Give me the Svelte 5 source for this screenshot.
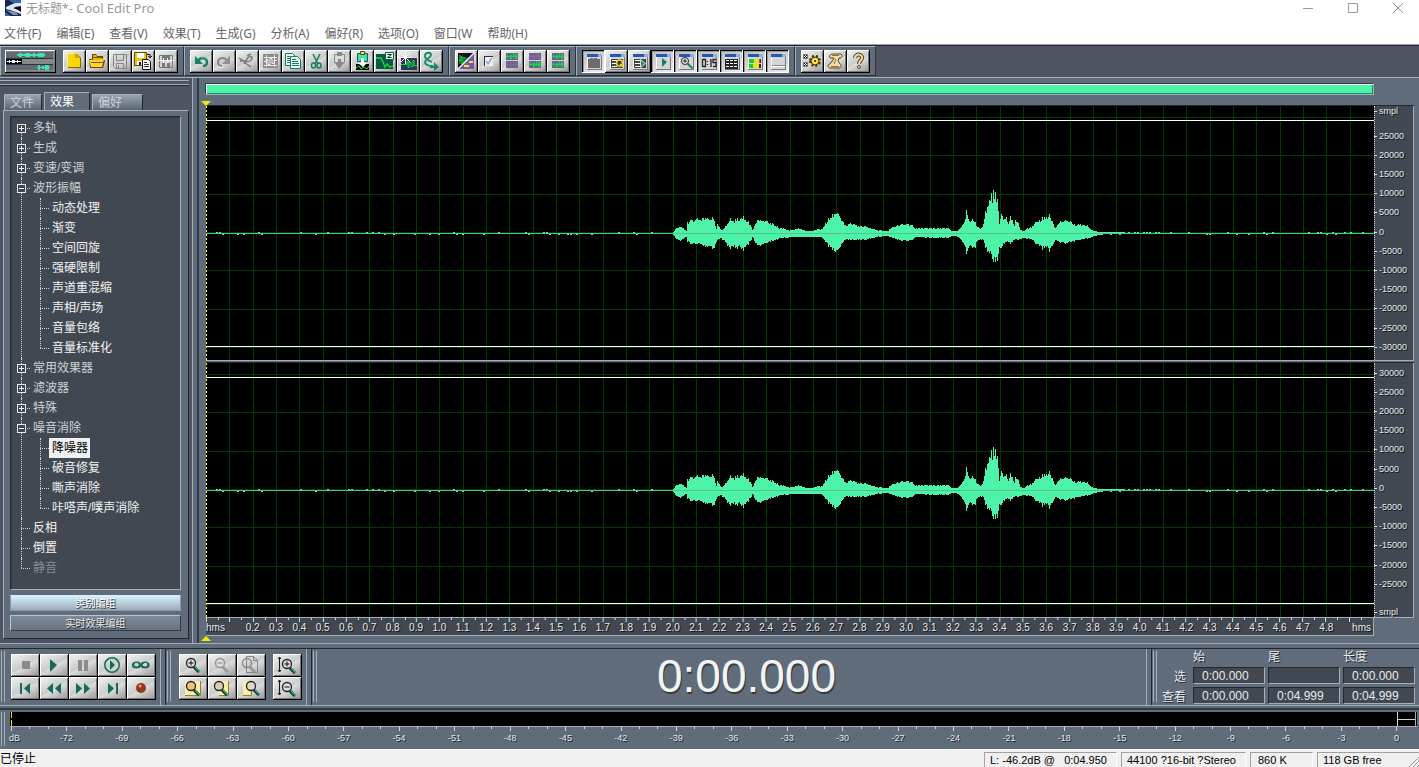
<script lang="ts">
    type TreeNode = { name: string; open?: boolean; disabled?: boolean; children?: string[] };

    const menus = ['文件(F)', '编辑(E)', '查看(V)', '效果(T)', '生成(G)', '分析(A)', '偏好(R)', '选项(O)', '窗口(W', '帮助(H)'];

    let tree: TreeNode[] = $state([
        { name: '多轨', children: [] },
        { name: '生成', children: [] },
        { name: '变速/变调', children: [] },
        { name: '波形振幅', open: true, children: ['动态处理', '渐变', '空间回旋', '强硬限制', '声道重混缩', '声相/声场', '音量包络', '音量标准化'] },
        { name: '常用效果器', children: [] },
        { name: '滤波器', children: [] },
        { name: '特殊', children: [] },
        { name: '噪音消除', open: true, children: ['降噪器', '破音修复', '嘶声消除', '咔嗒声/噗声消除'] },
        { name: '反相' },
        { name: '倒置' },
        { name: '静音', disabled: true }
    ]);
    let selected = $state('降噪器');
    let tab = $state('效果');

    // window frame shared by the view toggle buttons
    const win = '<path fill="#d5d5d5" d="M5 5h15v15H5z"/><path fill="#fff" d="M5 7h1v12H5z"/><path fill="#2456b8" d="M5 4h11v3H5z"/><path fill="#8ab0e8" d="M16 4h4v3h-4z"/><path fill="#777" d="M19 7h1v13H5v-1h14z"/>';
    const waveRow = (y: number, c: string, bg: string) =>
        `<path fill="${bg}" d="M5 ${y}h12v7H5z"/><path fill="${c}" d="M5 ${y + 3}h12v1H5zM6 ${y + 1}h1v4H6zM9 ${y + 2}h2v4H9zM12 ${y}h1v5h-1zM14 ${y + 1}h2v5h-2z"/>`;
    const lens = (x: number, y: number, c: string, fill: string, handle: string) =>
        `<circle cx="${x}" cy="${y}" r="4.5" fill="${fill}" stroke="${c}" stroke-width="1.3"/><path stroke="${c}" stroke-width="3" d="M${x + 3} ${y + 4}l5 5"/><path stroke="${handle}" stroke-width="1.6" d="M${x + 4} ${y + 4}l5 5"/>`;
    const pageLens = '<path fill="#f5efaa" d="M';

    const icons: Record<string, string> = {
        multi: '<path fill="#888" d="M1 1h48v20H1z"/><path fill="#66686e" d="M1 2h47v6H1zM1 15h47v5H1z"/><path fill="#000" d="M1 9h16v5H1z"/><path stroke="#22364f" d="M1 8.5h47M1 14.5h47"/><path fill="#3fe5b0" d="M12 4h28v2H12zM14 3h3v4h-3zM20 3h5v4h-5zM28 3h2v4h-2zM33 3h6v4h-6zM32 17h13v1H32zM33 15h2v5h-2zM37 16h2v3h-2zM40 15h4v5h-4z"/><path fill="#fff" d="M2 11h14v1H2zM4 10h1v3H4zM7 10h3v3H7zM12 10h1v3h-1z"/>',
        new: '<path fill="#8a6500" d="M5 4h9l4 4v10H5z"/><path fill="#f6d90b" d="M4 3h8l5 5v9H4z"/><path fill="#d1a108" d="M12 3v5h5z"/><path fill="#fff27a" d="M4 3h7v1H5v12H4z"/>',
        open: '<path fill="#664900" d="M6 4h4l1 2h6v4h2v1l-2 7H4L3 9h3z"/><path fill="#e5b20d" d="M7 5h3l1 2h5v3H8L5 9h2z"/><path fill="#ffd52e" d="M3 10h10l2-1h3l-2 8H5z"/><path stroke="#835e00" d="M5 12.500h12M7 7.500h9"/>',
        save: '<path fill="none" stroke="#858585" d="M4.500 4.500h13v14H6.500l-2-2zM7.500 4.500v6h7v-6M7.500 18.500v-5h7v5M9.500 15v3"/>',
        saveas: '<path fill="#edc20d" stroke="#6d4c00" d="M2.500 2.500h12v13h-12z"/><path fill="#fff" d="M5 3h7v5H5zM5 11h6v4H5z"/><path fill="#222" d="M7 12h2v3H7z"/><path fill="#fff" stroke="#111" d="M10.500 9.500h6l2 2v8h-8z"/><path stroke="#333" d="M12 12.500h3M12 14.500h5M12 16.500h5"/><path fill="none" stroke="#111" d="M15 4.500h3v3M16.500 6l1.500 2 2-2"/>',
        savesel: '<path fill="none" stroke="#777" d="M4.500 5.500h13v12h-13z"/><path fill="#777" d="M7 6h8v4H7zM7 13h3v4H7zM12 13h3v4h-3z"/><path stroke="#eee" d="M3 10.500h15M8.500 8v5M12.500 8v5"/>',
        undo: '<path fill="none" stroke="#168264" stroke-width="2.400" d="M8 11c3-5 9-3 9 1 0 3-2 4-4 4"/><path fill="#168264" d="M5 6v8h8z"/><path stroke="#77c9ac" d="M11 7.500c3-1 5 0 6 2" fill="none"/>',
        redo: '<path fill="none" stroke="#858585" stroke-width="2" d="M14 11c-3-5-9-3-9 1 0 3 2 4 4 4"/><path fill="#8f8f8f" d="M17 6v8H9z"/><path fill="none" stroke="#fff" d="M6 16c1 2 3 2 4 1"/>',
        trim: '<path fill="none" stroke="#777" stroke-width="1.400" d="M3 8l5 3c6 2 8-1 8-3s-3-2-5 1l-3 5M8 12l7 5M4 11h7M11 6l4-2"/>',
        sel: '<path fill="#8a8a8a" d="M4 4h15v14H4z"/><path fill="none" stroke="#eee" d="M5 7.500h13M5 15.500h13M5 11.500h2V9.500h2v5h2v-6h2v5h2v-3h3M7.500 5v12M15.500 5v12"/>',
        copy: '<g fill="#eafff6" stroke="#187d62"><path d="M3.500 3.500h7l3 3v9h-10z"/><path d="M8.500 6.500h7l3 3v9h-10z"/></g><path stroke="#187d62" d="M5 6.500h3M5 8.500h3M5 10.500h3M5 12.500h3M10 9.500h4M10 11.500h6M10 13.500h7M10 15.500h7"/>',
        cut: '<path fill="none" stroke="#187d62" stroke-width="1.500" d="M8 4l5 10M15 4l-5 10"/><g fill="none" stroke="#187d62" stroke-width="1.500"><ellipse cx="8.500" cy="15.500" rx="2" ry="2.500"/><ellipse cx="14" cy="15.500" rx="2" ry="2.500"/></g>',
        paste: '<path fill="#ddd" stroke="#888" d="M6.500 4.500h10v8h-10z"/><path fill="#888" d="M9 2h5v4H9zM10 9h3v4h3l-5 6-4-6h3z"/>',
        mix: '<path fill="#47dfa8" stroke="#07664b" d="M6.500 3.500h10v8h-10z"/><path fill="#f0de40" stroke="#54510c" d="M9.500 1.500h4v3h-4z"/><path fill="#000" d="M5 14h13v6H5z"/><path fill="#fff" d="M10 8h3v5h3l-4 4-5-4h3z"/><path stroke="#16ee2d" fill="none" d="M5 18l3-2 2 3 3-2 3 2 2-3"/>',
        zero: '<path fill="#055b47" d="M2 4h17v15H2z"/><path stroke="#164b43" d="M2 9.500h17M2 14.500h17"/><path fill="none" stroke="#1dde32" stroke-width="1.300" d="M2 8h5l2 4 2 5 2-3 3 3 3-1"/><path fill="#dff8ed" stroke="#08634a" d="M11.500 2.500h8v7h-8z"/><path fill="none" stroke="#222" d="M13.500 4.500h4l-4 3h4"/>',
        gen: '<path fill="#32345d" d="M4 8h16v12H4z"/><path stroke="#00e428" fill="none" d="M4 14.500h6v-3h1v6h1v-5h2v4h2v-6h1v5h3"/><path stroke="#fff" d="M8.500 2v12M2 7.500h13M4 3l9 9M13 3l-9 9"/>',
        batch: '<path fill="none" stroke="#158766" stroke-width="1.800" d="M12 12C7 10 4 8 5 5c1-3 6-3 6 0 0 3-6 4-6 7 0 4 5 4 8 4"/><path fill="#158766" d="M14 12l5 5-5 4v-3h-4v-2h4z"/>',
        spectral: '<path fill="#131322" d="M3 3h16v16H3z"/><path fill="#7457a5" d="M19 3v16H3z"/><path stroke="#10e22b" fill="none" d="M4 10.500h2v-4h1v8h1v-7h2v4h2v-4M5 5v9"/><path stroke="#eee" stroke-width="1.500" d="M3 19L19 3"/><path fill="#f1e24b" d="M9 15h5v2H9zM14 11h4v2h-4z"/>',
        check: '<path fill="#f0f0f0" d="M6 6h9v10H6z"/><path fill="#332d3d" d="M6 6h9v1H7v9H6z"/><path fill="none" stroke="#92a5c7" stroke-width="1.500" d="M8 11l2 3 4-6"/>',
        left: waveRow(3, '#08e126', '#7457a5') + waveRow(11, '#77737c', '#7457a5'),
        right: waveRow(3, '#77737c', '#7457a5') + waveRow(11, '#08e126', '#7457a5'),
        both: waveRow(3, '#08e126', '#7457a5') + waveRow(11, '#08e126', '#7457a5'),
        winfile: win + '<path fill="#6b6b6b" d="M6 9h2V8h3v1h1V8h3v1h3v9H6z"/>',
        wincue: win + '<path fill="#444" d="M6 9h12v9H6z"/><path stroke="#fff" d="M7 10.500h5M7 13.500h5M7 16.500h5"/><circle cx="14.500" cy="13" r="3" fill="#333" stroke="#f1db15" stroke-width="1.500"/><path stroke="#f1db15" stroke-width="1.500" d="M15 14l3 3"/>',
        winlist: win + '<path fill="#444" d="M6 9h12v9H6z"/><path stroke="#fff" d="M7 10.500h5M7 13.500h5M7 16.500h5"/><path fill="#1f9578" stroke="#ddd" d="M12.500 9.500v8l5-4z"/>',
        winplay: win + '<path fill="#137f65" d="M11 8v9l5-5z"/>',
        winzoom: win + '<circle cx="11" cy="11" r="3.500" fill="#eee" stroke="#222"/><path stroke="#222" d="M9 11h4M11 9v4"/><path stroke="#1d7f63" stroke-width="2" d="M13.500 13.500l5 5"/>',
        wintime: win + '<path fill="none" stroke="#222" stroke-width="1.300" d="M5.500 9.500h3v7h-3zM10.500 11v1M10.500 14v1M13 10h1v7M19 9.500h-3v3h3v4h-3"/>',
        winsel: win + '<path fill="#222" d="M5 9h13v10H5z"/><path stroke="#fff" stroke-width="1" d="M6 10.500h3M10 10.500h3M14 10.500h3M6 13.500h3M10 13.500h3M14 13.500h3M6 16.500h3M10 16.500h3M14 16.500h3"/>',
        winlevel: win + '<path fill="#17d22b" d="M6 9h5v4H6zM6 14h4v4H6z"/><path fill="#eee018" d="M11 9h5v4h-5zM10 14h6v4h-6z"/><path fill="#e83b21" d="M16 9h1v4h-1z"/><path fill="#222" d="M17 9h1v4h-1zM16 14h2v4h-2z"/>',
        winstatus: win + '<path stroke="#888" d="M6 15.500h13"/><path stroke="#fff" d="M6 16.500h13"/>',
        settings: '<g fill="#fff" stroke="#777"><path d="M2.500 4.500h4v4h-4zM2.500 12.500h4v4h-4z"/></g><path stroke="#111" d="M3 5l3 3M6 5l-3 3M3 13l3 3M6 13l-3 3"/><circle cx="14" cy="11" r="4" fill="#f2ca20" stroke="#4b3500"/><path stroke="#4b3500" stroke-width="2" stroke-dasharray="2 2" fill="none" d="M9 11a5 5 0 1 0 10 0 5 5 0 1 0-10 0"/><circle cx="14" cy="11" r="2.500" fill="#ffeb6b"/><circle cx="14" cy="11" r="1" fill="#111"/>',
        script: '<path fill="#f3dba3" stroke="#58401d" d="M8 4h9c2 1 1 4-1 4h-1l-1 3 2 3c2 1 1 4-1 4H6c-3-1-2-4 0-4l3-4 1-2H7C4 7 5 5 8 4z"/><path stroke="#8a7044" fill="none" d="M8 5.500h7M7 16.500h8M12 9l-2 5"/>',
        help: '<path fill="none" stroke="#5a4925" stroke-width="4" d="M8 8c0-5 8-4 7 0 0 2-3 3-3 6"/><path fill="none" stroke="#f2dda4" stroke-width="2" d="M8 8c0-5 8-4 7 0 0 2-3 3-3 6"/><circle cx="12" cy="17" r="1.500" fill="#f2dda4" stroke="#5a4925"/>',
        stop: '<path fill="#8a8a8a" d="M11 7h8v8h-8z"/>',
        play: '<path fill="#176a57" d="M10 5v13l7-7z"/>',
        pause: '<path fill="#8c8c8c" d="M9 6h4v11H9zM15 6h4v11h-4z"/>',
        loopplay: '<circle cx="14" cy="11" r="7" fill="none" stroke="#226455" stroke-width="2"/><circle cx="14" cy="11" r="6" fill="none" stroke="#b7e9db"/><path fill="#176a57" d="M12 6v10l5-5z"/>',
        loop: '<g fill="none" stroke="#176a57" stroke-width="2.200"><ellipse cx="9.500" cy="11" rx="3.500" ry="2.500"/><ellipse cx="18" cy="11" rx="3.500" ry="2.500"/></g><path stroke="#9de1cd" d="M8 9.500h3M17 9.500h3"/>',
        begin: '<path fill="#176a57" d="M9 6h2v11H9zM19 6v11l-6-5.500z"/>',
        rewind: '<path fill="#176a57" d="M13 6v11l-6-5.500zM21 6v11l-6-5.500z"/>',
        forward: '<path fill="#176a57" d="M7 6v11l6-5.500zM15 6v11l6-5.500z"/>',
        end: '<path fill="#176a57" d="M10 6v11l6-5.500zM18 6h2v11h-2z"/>',
        rec: '<circle cx="14" cy="11" r="5" fill="#93361c"/><circle cx="13" cy="9" r="1.500" fill="#ff9a78"/>',
        zin: lens(12, 9, '#222', '#ddd', '#23b78c') + '<path stroke="#111" d="M9.500 9h5M12 6.500v5"/>',
        zout: lens(12, 9, '#929292', '#ddd', '#aaa') + '<path stroke="#888" d="M9.500 9h5"/>',
        zfull: '<path fill="none" stroke="#858585" d="M9.500 2.500h7l4 4v12h-11zM16.500 2.500v4h4"/>' + lens(10, 9, '#888', 'none', '#aaa'),
        zsel: pageLens + '6 4h16v15H6z"/><path stroke="#9c7b20" fill="none" d="M6 18.500h15.500V4"/>' + lens(12, 9, '#222', '#f3bf79', '#23b78c'),
        zleft: pageLens + '11 4h10v15H11z"/><path stroke="#9c7b20" fill="none" d="M11 18.500h9.500V4"/>' + lens(11, 9, '#222', '#dccdb0', '#23b78c'),
        zright: pageLens + '6 4h9v15H6z"/><path stroke="#9c7b20" fill="none" d="M6 18.500h8.500V4"/>' + lens(14, 9, '#222', '#dcdac5', '#23b78c'),
        vin: '<path stroke="#111" fill="none" d="M6.500 3v15M5 5l1.500-2L8 5M5 16l1.500 2L8 16"/>' + lens(14, 10, '#222', '#ddd', '#23b78c') + '<path stroke="#111" d="M11.500 10h5M14 7.500v5"/>',
        vout: '<path stroke="#111" fill="none" d="M6.500 3v15M5 5l1.500-2L8 5M5 16l1.500 2L8 16"/>' + lens(14, 10, '#222', '#ddd', '#23b78c') + '<path stroke="#111" d="M11.500 10h5"/>'
    };

    const toolGroups = [
        ['new', 'open', 'save', 'saveas', 'savesel'],
        ['undo', 'redo', 'trim', 'sel', 'copy', 'cut', 'paste', 'mix', 'zero', 'gen', 'batch'],
        ['spectral', 'check', 'left', 'right', 'both'],
        ['winfile', 'wincue', 'winlist', 'winplay', 'winzoom', 'wintime', 'winsel', 'winlevel', 'winstatus'],
        ['settings', 'script', 'help']
    ];
    const pressed = ['winfile', 'winplay', 'winzoom', 'wintime', 'winsel', 'winlevel', 'winstatus'];
    const transport = ['stop', 'play', 'pause', 'loopplay', 'loop', 'begin', 'rewind', 'forward', 'end', 'rec'];
    const zooms = ['zin', 'zout', 'zfull', 'zsel', 'zleft', 'zright'];

    // [x, peak above zero, peak below zero]
    const envelope = [
        [466, 0, 0], [470, 5, 5], [474, 6, 7], [477, 5, 5], [480, 2, 3], [481, 11, 8], [484, 13, 10], [489, 13, 10], [491, 15, 10], [494, 13, 10], [497, 15, 12], [501, 15, 13], [506, 16, 15],
        [508, 12, 14], [510, 4, 8], [511, 9, 6], [514, 4, 4], [516, 3, 6], [519, 7, 8], [521, 9, 12], [524, 15, 15], [527, 12, 13], [531, 15, 15], [534, 14, 13], [537, 17, 17], [539, 13, 13],
        [542, 12, 11], [545, 6, 6], [546, 3, 3], [549, 9, 9], [551, 13, 11], [554, 13, 12], [557, 12, 10], [561, 12, 9], [567, 9, 7], [571, 7, 6], [572, 5, 5], [577, 5, 4], [582, 3, 4],
        [587, 3, 3], [592, 5, 3], [597, 3, 3], [604, 2, 3], [611, 4, 3], [616, 4, 4], [619, 10, 8], [622, 15, 13], [626, 19, 16], [629, 19, 18], [631, 20, 16], [634, 15, 13], [637, 11, 8],
        [639, 8, 6], [644, 10, 6], [648, 9, 6], [652, 7, 6], [659, 7, 6], [664, 5, 5], [671, 3, 3], [681, 2, 2], [686, 6, 4], [691, 8, 6], [696, 9, 7], [701, 9, 7], [706, 8, 6],
        [708, 5, 4], [712, 5, 3], [724, 5, 4], [742, 5, 4], [746, 2, 2], [751, 2, 3], [753, 4, 4], [756, 8, 8], [759, 14, 13], [760, 23, 20], [762, 14, 14], [766, 14, 14],
        [769, 11, 14], [770, 7, 8], [775, 5, 6], [777, 9, 6], [779, 22, 14], [781, 26, 18], [783, 33, 19], [785, 40, 20], [786, 30, 25], [787, 43, 28], [789, 41, 28], [791, 34, 27],
        [792, 22, 20], [793, 9, 13], [795, 19, 14], [798, 14, 10], [800, 16, 8], [802, 9, 8], [804, 17, 10], [806, 13, 8], [808, 7, 6], [809, 13, 5], [812, 10, 6], [814, 3, 5],
        [817, 2, 4], [821, 5, 5], [826, 7, 6], [829, 11, 10], [833, 13, 12], [836, 16, 16], [840, 16, 13], [843, 19, 18], [846, 12, 12], [848, 6, 8], [851, 8, 7], [854, 12, 9],
        [859, 13, 10], [864, 12, 8], [868, 9, 8], [874, 9, 6], [881, 8, 5], [884, 4, 4], [888, 2, 2], [894, 1, 1], [900, 1, 0], [918, 1, 0], [919, 0, 0]
    ];

    function noise(n: number) {
        const v = Math.sin(n * 12.9898) * 43758.5453;
        return v - Math.floor(v);
    }

    function buildWave() {
        let d = '';
        for (let i = 0; i < envelope.length - 1; i++) {
            const [x0, u0, l0] = envelope[i];
            const [x1, u1, l1] = envelope[i + 1];
            for (let x = x0; x < x1; x++) {
                const t = (x - x0) / (x1 - x0);
                const k = x === x0 ? 1 : 0.8 + noise(x) * 0.22;
                const up = Math.round((u0 + (u1 - u0) * t) * k);
                const low = Math.round((l0 + (l1 - l0) * t) * k);
                d += `M${x} ${127 - up}h1v${up + low + 1}h-1z`;
            }
        }
        // low level hiss on both sides of the speech
        for (let x = 10; x < 1167; x += 3) {
            const limit = x > 890 && x < 970 ? 0.4 : 0.72;
            if ((x < 464 || x > 890) && noise(x) > limit) d += `M${x} ${noise(x + 1) > 0.5 ? 126 : 128}h2v1h-2z`;
        }
        return d;
    }
    const wave = buildWave();

    const vGrid = Array.from({ length: 49 }, (_, i) => Math.round((i + 1) * 23.34));
    const hGrid = [11, 49, 88, 126, 164, 203, 241];
    const scales = [
        ['smpl', ...Array.from({ length: 12 }, (_, i) => String(25000 - i * 5000))],
        [...Array.from({ length: 12 }, (_, i) => String(30000 - i * 5000)), 'smpl']
    ];
    const times = Array.from({ length: 47 }, (_, i) => ((i + 2) / 10).toFixed(1));
    const levels = Array.from({ length: 24 }, (_, i) => -72 + i * 3);
</script>

{#snippet tool(name: string, w: number)}
    <button class="tool" class:down={pressed.includes(name)} aria-label={name}>
        <svg width={w} height="22" viewBox="0 0 {w} 22">{@html icons[name]}</svg>
    </button>
{/snippet}

<div class="app">
    <header class="title">
        <svg width="16" height="16" viewBox="0 0 16 16">
            <path fill="#16244c" d="M0 0h16v16H0z" />
            <path fill="#3865ae" d="M3 0h13v3H9zM0 12l6 4H0z" />
            <path fill="#dfe8f2" d="M1 7l9-4h6v3l-7 1 7 5v2L5 10 1 9z" />
            <path fill="#090d1b" d="M8 8l8-1v4z" />
            <path fill="#7c94ad" d="M1 10l9 2 4 3H8z" />
        </svg>
        <span class="caption">无标题*<span class="product"> - Cool Edit Pro</span></span>
        <button aria-label="minimize"><svg width="10" height="10"><path d="M0 5.500h10" /></svg></button>
        <button aria-label="maximize"><svg width="10" height="10"><path d="M.5.5h9v9h-9z" /></svg></button>
        <button aria-label="close"><svg width="10" height="10"><path d="M0 0l10 10M10 0L0 10" /></svg></button>
    </header>
    <nav class="menu">
        {#each menus as item}
            <button>{item}</button>
        {/each}
    </nav>

    <div class="toolbar">
        {#each toolGroups as group, i}
            <div class="group">
                {#if i === 0}
                    <div class="wide">{@render tool('multi', 50)}</div>
                {/if}
                {#each group as name}
                    {@render tool(name, 22)}
                {/each}
            </div>
        {/each}
    </div>

    <main>
        <aside>
            <div class="grip"></div>
            <div class="tabs">
                {#each ['文件', '效果', '偏好'] as name}
                    <button class:active={tab === name} onclick={() => (tab = name)}>{name}</button>
                {/each}
            </div>
            <div class="panel">
                <ul class="tree">
                    {#each tree as node}
                        <li>
                            {#if node.children}
                                <button class="toggle" class:open={node.open} aria-label="toggle {node.name}" onclick={() => (node.open = !node.open)}></button>
                            {/if}
                            <button class="label" class:group-label={node.children} disabled={node.disabled}>{node.name}</button>
                            {#if node.open && node.children}
                                <ul>
                                    {#each node.children as child}
                                        <li><button class="label" class:selected={selected === child} onclick={() => (selected = child)}>{child}</button></li>
                                    {/each}
                                </ul>
                            {/if}
                        </li>
                    {/each}
                </ul>
                <button class="sort lit">类别编组</button>
                <button class="sort">实时效果编组</button>
            </div>
        </aside>

        <section class="editor">
            <div class="overview"></div>
            <div class="channels">
                {#each scales as labels, c}
                    <svg class="channel" viewBox="0 0 1168 254" preserveAspectRatio="none" shape-rendering="crispEdges">
                        <g stroke="#003c00">
                            {#each vGrid as x}<path d="M{x}.5 0v254" />{/each}
                            {#each hGrid as y}<path d="M0 {y}.5h1168" />{/each}
                        </g>
                        <path stroke="#fff" d="M0 14.500h1168M0 240.500h1168" />
                        <path fill="#4cf3a9" d={wave} />
                        <path stroke="#51c486" d="M0 127.500h1168" />
                        <path stroke="#ff0" stroke-dasharray="2 2" d="M.5 0v254" />
                    </svg>
                    <div class="scale" class:lower={c === 1}>
                        {#each labels as l}<span>{l}</span>{/each}
                    </div>
                {/each}
                <div class="ruler">
                    <svg viewBox="0 0 1168 4" preserveAspectRatio="none" shape-rendering="crispEdges">
                        {#each [0, ...vGrid] as x}
                            <path stroke="#dde2e8" d="M{x}.5 0v4M{x + 12}.5 0v2" />
                        {/each}
                    </svg>
                    <div class="times">
                        <span class="first">hms</span>
                        {#each times as t}<span>{t}</span>{/each}
                        <span class="last">hms</span>
                    </div>
                </div>
                <svg class="mark top" width="10" height="6"><path d="M0 0h10L5 5z" /></svg>
                <svg class="mark bottom" width="10" height="6"><path d="M0 5h10L5 0z" /></svg>
            </div>
        </section>
    </main>

    <div class="dock">
        <div class="pane">
            <div class="pad play">
                {#each transport as name}{@render tool(name, 28)}{/each}
            </div>
        </div>
        <div class="pane">
            <div class="pad zoom">
                {#each zooms as name}{@render tool(name, 28)}{/each}
            </div>
            <div class="pad vert">
                {@render tool('vin', 28)}
                {@render tool('vout', 28)}
            </div>
        </div>
        <div class="pane clock">0:00.000</div>
        <div class="pane last-pane">
            <div class="fields">
                <span></span><span>始</span><span>尾</span><span>长度</span>
                <span class="row">选</span>
                <input aria-label="选 始" value="0:00.000" />
                <input aria-label="选 尾" value="" />
                <input aria-label="选 长度" value="0:00.000" />
                <span class="row">查看</span>
                <input aria-label="查看 始" value="0:00.000" />
                <input aria-label="查看 尾" value="0:04.999" />
                <input aria-label="查看 长度" value="0:04.999" />
            </div>
        </div>
    </div>

    <div class="meter">
        <div class="bar"><i class="floor"></i><i class="clip"></i></div>
        <svg viewBox="0 0 1386 4" preserveAspectRatio="none" shape-rendering="crispEdges">
            {#each Array(76) as _, i}
                <path stroke="#cfd6de" d="M{Math.min(Math.round(i * 18.47), 1385)}.5 0v{i % 3 ? 2 : 4}" />
            {/each}
        </svg>
        <div class="levels">
            <span class="first">dB</span>
            {#each levels as l}<span>{l}</span>{/each}
            <span class="last">0</span>
        </div>
    </div>

    <footer>
        <span class="state">已停止</span>
        <span class="cell pos">L: -46.2dB @ &nbsp; 0:04.950</span>
        <span class="cell format">44100 ?16-bit ?Stereo</span>
        <span class="cell size">860 K</span>
        <span class="cell free">118 GB free</span>
        <svg width="10" height="10"><path stroke="#999" d="M0 10L10 0M4 10l6-6M8 10l2-2" /></svg>
    </footer>
</div>

<style>
    :global(body) {
        margin: 0;
    }

    .app {
        min-height: 100vh;
        display: flex;
        flex-direction: column;
        background: #606c7a;
        font-family: "Liberation Sans", "Noto Sans CJK SC", sans-serif;
        font-size: 12px;
        color: #e8ebee;
    }

    .app * {
        box-sizing: border-box;
    }

    button {
        font: inherit;
        color: inherit;
        padding: 0;
        border: none;
        background: none;
    }

    svg {
        display: block;
        fill: none;
    }

    .title {
        display: flex;
        align-items: center;
        height: 18px;
        padding: 0 16px 2px 5px;
        background: #fff;
        color: #999;
        font-family: "Noto Sans", "Noto Sans CJK SC", sans-serif;
    }

    .caption {
        flex: 1;
        margin-left: 5px;
        line-height: 16px;
    }

    .product {
        font-size: 13px;
    }

    .title button {
        width: 10px;
        margin-left: 35px;
    }

    .title button svg {
        stroke: #999;
    }

    .menu {
        display: flex;
        gap: 15px;
        height: 28px;
        padding: 6px 4px 0;
        background: #fff;
        border-bottom: 1px solid #22262d;
        box-shadow: inset 0 -1px #a0a0a0;
        color: #666;
        font-family: "Noto Sans", "Noto Sans CJK SC", sans-serif;
    }

    .menu button {
        height: 20px;
        line-height: 20px;
        white-space: nowrap;
    }

    .toolbar {
        display: flex;
        height: 32px;
        padding-bottom: 1px;
        background: #4e5461;
        border-bottom: 1px solid #a3afbb;
    }

    .group {
        display: flex;
        padding: 3px 5px;
        background: #606c7a;
        border: 1px solid #2d323b;
        border-top-color: #a3afbb;
        border-left-color: #a3afbb;
    }

    .group:first-child {
        padding-left: 4px;
    }

    .wide {
        margin-right: 7px;
    }

    .tool {
        height: 23px;
        border-right: 1px solid #000;
        border-bottom: 1px solid #000;
        background: linear-gradient(150deg, #ececec 10%, #c9cccc 50%, #dcdcdc 55%, #969696);
        box-shadow: inset 1px 1px #fff, inset -1px -1px #777;
    }

    .tool.down {
        border-color: #fff;
        background: linear-gradient(150deg, #bcbcbc, #ececec);
        box-shadow: inset 1px 1px #000, inset 2px 2px #999;
    }

    main {
        flex: 1;
        display: flex;
        border-bottom: 1px solid #a3afbb;
    }

    aside {
        display: flex;
        flex-direction: column;
        width: 199px;
        padding: 2px 8px 4px 3px;
        background: #4e5461;
        border-right: 2px solid #343a44;
        box-shadow: inset -1px 0 #606c7a, inset -4px 0 #606c7a, inset -5px 0 #a3afbb;
    }

    .grip {
        height: 5px;
        margin-left: -3px;
        border: 1px solid #a3afbb;
        border-width: 1px 0;
        box-shadow: 0 1px #22262d;
    }

    .tabs {
        display: flex;
        align-items: flex-end;
        gap: 2px;
        height: 25px;
        margin-left: 1px;
    }

    .tabs button {
        width: 38px;
        height: 16px;
        padding-left: 5px;
        text-align: left;
        line-height: 16px;
        background: linear-gradient(#98a4b2, #5b6673);
        border-top: 1px solid #a3afbb;
        border-left: 1px solid #a3afbb;
        border-right: 1px solid #22262d;
        color: #ccd2d8;
    }

    .tabs button.active {
        width: 46px;
        height: 19px;
        margin-bottom: -1px;
        background: #606c7a;
        color: #fff;
    }

    .tabs button:last-child {
        width: 51px;
    }

    .panel {
        flex: 1;
        display: flex;
        flex-direction: column;
        gap: 4px;
        padding: 5px 7px 7px 6px;
        background: #606c7a;
        border: 1px solid #22262d;
        border-top-color: #a3afbb;
        border-left-color: #a3afbb;
    }

    ul {
        margin: 0;
        padding: 0;
        list-style: none;
    }

    .tree {
        flex: 1;
        margin-bottom: 1px;
        padding: 1px 0 8px 6px;
        background: #424851;
        border: 1px solid #a3afbb;
        border-top-color: #22262d;
        border-left-color: #22262d;
        box-shadow: inset 1px 1px #343a44;
    }

    .tree li {
        position: relative;
        min-height: 20px;
        line-height: 20px;
    }

    .tree li::before {
        content: '';
        position: absolute;
        left: 4px;
        top: 0;
        bottom: 0;
        border-left: 1px dotted #cfd3d8;
    }

    .tree > li:first-child::before {
        top: 10px;
    }

    .tree li:last-child::before {
        bottom: auto;
        height: 10px;
    }

    .tree li::after {
        content: '';
        position: absolute;
        left: 4px;
        top: 10px;
        width: 9px;
        border-top: 1px dotted #cfd3d8;
    }

    .tree ul {
        padding-left: 19px;
    }

    .toggle {
        position: absolute;
        z-index: 1;
        left: 0;
        top: 6px;
        width: 9px;
        height: 9px;
        border: 1px solid #e8ebee;
        background:
            linear-gradient(#fff, #fff) center / 5px 1px no-repeat,
            linear-gradient(#fff, #fff) center / 1px 5px no-repeat,
            #424851;
    }

    .toggle.open {
        background: linear-gradient(#fff, #fff) center / 5px 1px no-repeat, #424851;
    }

    .label {
        display: block;
        height: 20px;
        margin-left: 13px;
        padding: 0 2px 0 3px;
        line-height: 18px;
        color: #f3f3f3;
        white-space: nowrap;
    }

    .group-label {
        color: #cfd2d6;
    }

    .label:disabled {
        color: #888b91;
    }

    .label.selected {
        background: #f0f0f0;
        color: #000;
    }

    .sort {
        height: 16px;
        font-size: 10px;
        line-height: 13px;
        background: linear-gradient(#7e8a9c, #6a7380);
        border: 1px solid #343a44;
        border-top-color: #b7c6d4;
        border-left-color: #b7c6d4;
        text-shadow: 1px 1px #222;
    }

    .sort.lit {
        background: linear-gradient(#d5f0ff, #9cabb9);
        border-color: #8b98a5;
        border-top-color: #d5f0ff;
        color: #fff;
    }

    .editor {
        flex: 1;
        display: flex;
        flex-direction: column;
        padding: 5px 5px 7px 7px;
    }

    .overview {
        height: 12px;
        margin-right: 40px;
        margin-left: -1px;
        background: #4cf3a9;
        border: 1px solid #343a44;
        border-right-color: #a3afbb;
        border-bottom-color: #a3afbb;
        box-shadow: inset 1px 1px #fff, inset -1px -1px #089a5c;
    }

    .channels {
        position: relative;
        flex: 1;
        display: grid;
        grid-template-columns: 1fr 40px;
        grid-template-rows: minmax(0, 1fr) minmax(0, 1fr) 16px;
        row-gap: 3px;
        margin-top: 11px;
    }

    .channel {
        width: 100%;
        height: 0;
        min-height: 100%;
        background: #000;
        box-shadow: 0 -1px #22262d, 0 1px #a3afbb;
    }

    .scale {
        position: relative;
        display: grid;
        grid-template-rows: 100fr repeat(12, 96fr) 18fr;
        align-items: center;
        padding-left: 5px;
        background: #424851;
        border-right: 1px solid #a3afbb;
        box-shadow: 0 -1px #22262d, 0 1px #a3afbb;
        font-size: 9px;
        line-height: 10px;
        text-shadow: 1px 1px #111;
    }

    .scale::before {
        content: '';
        position: absolute;
        left: 0;
        top: 0;
        bottom: 0;
        border-left: 1px dotted #cfd6de;
    }

    .scale span::before {
        content: '';
        position: absolute;
        left: 0;
        width: 3px;
        height: 5px;
        border-bottom: 1px solid #dde2e8;
    }

    .scale span:first-child {
        align-self: start;
    }

    .scale.lower {
        grid-template-rows: repeat(12, 96fr) 118fr;
    }

    .scale.lower span:first-child {
        align-self: center;
    }

    .scale.lower span:last-child {
        align-self: end;
    }

    .ruler {
        margin-top: -2px;
        background: #424851;
        border-right: 1px solid #a3afbb;
        border-bottom: 1px solid #a3afbb;
        font-size: 10px;
        line-height: 11px;
        text-shadow: 1px 1px #111;
    }

    .ruler svg {
        width: 100%;
        height: 4px;
    }

    .times {
        display: grid;
        grid-template-columns: 3fr repeat(47, 2fr) 3fr;
        text-align: center;
    }

    .times span {
        min-width: 0;
    }

    .times .first {
        text-align: left;
    }

    .times .last {
        text-align: right;
        padding-right: 2px;
    }

    .mark {
        position: absolute;
        left: -5px;
        fill: #f0e80c;
    }

    .mark.top {
        top: -5px;
    }

    .mark.bottom {
        bottom: -6px;
    }

    .dock {
        display: flex;
        margin-top: 4px;
        height: 58px;
        border-top: 1px solid #22262d;
        border-bottom: 1px solid #a3afbb;
    }

    .pane {
        display: flex;
        align-items: flex-start;
        padding: 5px 4px 0 10px;
        border-right: 1px solid #22262d;
        background:
            linear-gradient(#a3afbb, #a3afbb) 1px 2px / 1px 51px no-repeat,
            linear-gradient(#a3afbb, #a3afbb) 4px 2px / 1px 51px no-repeat;
        box-shadow: inset -4px 0 #606c7a, inset -5px 0 #a3afbb;
    }

    .pad {
        display: grid;
        grid-template-columns: repeat(5, 29px);
        margin-right: 5px;
    }

    .pad.play {
        margin-left: 1px;
    }

    .zoom {
        grid-template-columns: repeat(3, 29px);
        margin-left: 3px;
    }

    .vert {
        grid-template-columns: 29px;
        margin-left: 2px;
    }

    .clock {
        flex: 1;
        justify-content: center;
        padding: 0 0 0 30px;
        font-size: 46px;
        line-height: 54px;
        color: #f2f3f3;
        text-shadow: 1px 2px #343a44;
    }

    .last-pane {
        padding: 0 4px 0 10px;
        border-right: none;
        box-shadow: none;
    }

    .fields {
        display: grid;
        grid-template-columns: 28px repeat(3, 72px);
        grid-template-rows: 16px 17px 17px;
        gap: 3px;
        line-height: 16px;
        text-shadow: 1px 1px #22262d;
    }

    .fields .row {
        text-align: right;
        padding-right: 4px;
        line-height: 18px;
    }

    .fields input {
        width: 100%;
        min-width: 0;
        height: 17px;
        padding: 0 0 0 8px;
        margin-top: -1px;
        font: inherit;
        color: inherit;
        background: #424851;
        border: 1px solid #a3afbb;
        border-top-color: #22262d;
        border-left-color: #22262d;
        border-radius: 0;
    }

    .meter {
        height: 41px;
        margin-top: 2px;
        padding: 2px 22px 0 11px;
        border-top: 2px solid #343a44;
        background:
            linear-gradient(#a3afbb, #a3afbb) 1px 2px / 1px 34px no-repeat,
            linear-gradient(#a3afbb, #a3afbb) 4px 2px / 1px 34px no-repeat;
    }

    .bar {
        position: relative;
        height: 15px;
        margin-right: -20px;
        margin-left: -1px;
        background: #000;
        border-bottom: 1px solid #a3afbb;
    }

    .floor {
        position: absolute;
        left: 1px;
        top: 0;
        width: 1px;
        height: 14px;
        background: linear-gradient(#e8e020 6px, #000 6px, #000 8px, #e8e020 8px);
    }

    .clip {
        position: absolute;
        right: 1px;
        top: 0;
        width: 19px;
        height: 14px;
        border-left: 1px solid #cfd6de;
        border-right: 1px solid #a3afbb;
        background: linear-gradient(#cfd6de, #cfd6de) center / 100% 1px no-repeat;
    }

    .meter svg {
        width: 100%;
        height: 4px;
    }

    .levels {
        display: grid;
        grid-template-columns: 1fr repeat(24, 2fr) 1fr;
        text-align: center;
        font-size: 9px;
        line-height: 15px;
        text-shadow: 1px 1px #22262d;
    }

    .levels .first {
        margin-left: -2px;
        text-align: left;
    }

    .levels .last {
        margin-right: -2px;
        text-align: right;
    }

    footer {
        display: flex;
        gap: 4px;
        height: 18px;
        padding-top: 2px;
        background: #f0f0f0;
        border-top: 1px solid #fff;
        color: #000;
        font-size: 11px;
        line-height: 15px;
    }

    .state {
        flex: 1;
        font-size: 12px;
    }

    .cell {
        padding-left: 5px;
        border-top: 1px solid #a0a0a0;
        border-left: 1px solid #a0a0a0;
        border-right: 1px solid #fff;
        line-height: 14px;
        white-space: nowrap;
    }

    .pos {
        width: 133px;
    }

    .format {
        width: 125px;
    }

    .size {
        width: 63px;
        padding-left: 7px;
    }

    .free {
        width: 102px;
        margin-right: -14px;
        border-right: none;
    }

    footer svg {
        align-self: flex-end;
    }
</style>
